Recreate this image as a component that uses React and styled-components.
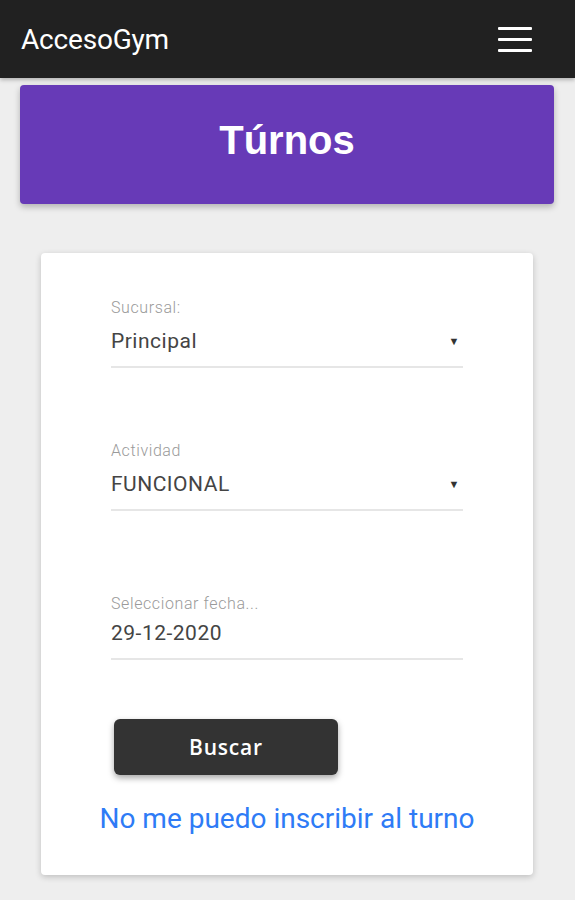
import React from "react";
import styled, { createGlobalStyle } from "styled-components";

const GlobalStyle = createGlobalStyle`
  html, body {
    margin: 0;
    padding: 0;
    background: #eeeeee;
    font-family: Roboto, "Liberation Sans", sans-serif;
  }
`;

const Page = styled.div`
  min-height: 900px;
  background: #eeeeee;
`;

const Header = styled.header`
  height: 78px;
  background: #212121;
  display: flex;
  align-items: center;
  justify-content: space-between;
  padding: 0 43px 0 21px;
  box-shadow: 0 2px 4px rgba(0, 0, 0, 0.25);
`;

const Brand = styled.div`
  color: #ffffff;
  font-size: 28px;
  letter-spacing: -0.2px;
`;

const Burger = styled.div`
  width: 34px;
  display: flex;
  flex-direction: column;
  gap: 8px;

  span {
    display: block;
    height: 3px;
    background: #ffffff;
    border-radius: 1px;
  }
`;

const Banner = styled.div`
  margin: 7px 21px 0 20px;
  height: 119px;
  padding-bottom: 8px;
  box-sizing: border-box;
  background: #673ab7;
  border-radius: 4px;
  box-shadow: 0 3px 6px rgba(0, 0, 0, 0.25);
  display: flex;
  align-items: center;
  justify-content: center;

  h1 {
    margin: 0;
    color: #ffffff;
    font-family: "Liberation Sans", Arial, sans-serif;
    font-size: 40px;
    font-weight: 700;
  }
`;

const Card = styled.div`
  margin: 49px 42px 0 41px;
  background: #ffffff;
  border-radius: 4px;
  box-shadow: 0 2px 6px rgba(0, 0, 0, 0.2);
  padding: 47px 70px 40px;
  display: flex;
  flex-direction: column;
  gap: 75px;
`;

const Field = styled.div`
  display: flex;
  flex-direction: column;
  border-bottom: 2px solid #e6e6e6;
  padding-bottom: 10px;
  margin-top: ${(p) => (p.$date ? "10px" : "0")};
`;

const Label = styled.label`
  font-size: 16px;
  line-height: 16px;
  color: #9a9a9a;
  font-weight: 300;
  letter-spacing: 0.6px;
`;

const Value = styled.div`
  margin-top: ${(p) => (p.$date ? "6px" : "10px")};
  height: 30px;
  display: flex;
  align-items: center;
  justify-content: space-between;
  font-size: 21px;
  letter-spacing: 0.5px;
  color: #444444;
`;

const Arrow = styled.span`
  font-size: 11px;
  color: #333333;
  margin-right: 3px;
`;

const Actions = styled.div`
  margin-top: -16px;
  display: flex;
  flex-direction: column;
  align-items: center;
  gap: 27px;
`;

const SearchButton = styled.button`
  align-self: flex-start;
  margin-left: 3px;
  width: 224px;
  height: 56px;
  background: #333333;
  color: #ffffff;
  border: none;
  border-radius: 6px;
  box-shadow: 0 3px 6px rgba(0, 0, 0, 0.35);
  font-family: "Open Sans", sans-serif;
  font-size: 21px;
  font-weight: 600;
  letter-spacing: 0.8px;
  cursor: pointer;
`;

const HelpLink = styled.a`
  color: #2e7bf6;
  font-size: 28px;
  text-decoration: none;
  white-space: nowrap;
`;

const fields = [
  { label: "Sucursal:", value: "Principal", select: true },
  { label: "Actividad", value: "FUNCIONAL", select: true },
  { label: "Seleccionar fecha...", value: "29-12-2020", select: false },
];

export default function App() {
  return (
    <Page>
      <GlobalStyle />
      <Header>
        <Brand>AccesoGym</Brand>
        <Burger>
          <span />
          <span />
          <span />
        </Burger>
      </Header>
      <Banner>
        <h1>Túrnos</h1>
      </Banner>
      <Card>
        {fields.map((f) => (
          <Field key={f.label} $date={!f.select}>
            <Label>{f.label}</Label>
            <Value $date={!f.select}>
              {f.value}
              {f.select && <Arrow>▼</Arrow>}
            </Value>
          </Field>
        ))}
        <Actions>
          <SearchButton>Buscar</SearchButton>
          <HelpLink href="#">No me puedo inscribir al turno</HelpLink>
        </Actions>
      </Card>
    </Page>
  );
}
